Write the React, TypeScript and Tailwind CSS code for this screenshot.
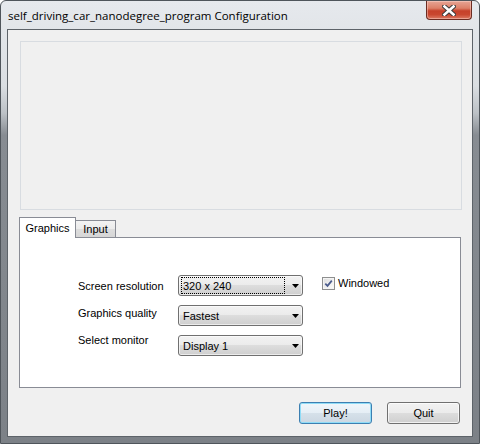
import { ReactNode } from "react"

const ui = "font-['Liberation_Sans',Arial,sans-serif] text-[11px] text-black"

function Combo({ value, focused }: { value: string; focused?: boolean }) {
  return (
    <div className="flex h-[21px] w-[125px] items-center rounded-[3px] border border-[#707070] bg-[linear-gradient(#f2f2f2,#ebebeb_50%,#dddddd_50%,#cfcfcf)] shadow-[inset_0_0_0_1px_rgba(255,255,255,0.6)]">
      <div
        className={
          "ml-[2px] flex h-[17px] w-[104px] items-center pl-px leading-[14px] " +
          (focused ? "border border-dotted border-black" : "border border-transparent")
        }
      >
        {value}
      </div>
      <svg width="7" height="4" viewBox="0 0 7 4" className="ml-auto mr-[3px]">
        <path d="M0 0 H7 L3.5 4 Z" fill="#000" />
      </svg>
    </div>
  )
}

function Button({ children, primary }: { children: ReactNode; primary?: boolean }) {
  return (
    <div
      className={
        "flex h-[22px] w-[73px] items-center justify-center rounded-[3px] border leading-[14px] " +
        (primary
          ? "border-[#3c7fb1] bg-[linear-gradient(#f0f6fa,#e5eef5_50%,#d6e1ea_50%,#cbd7e2)] shadow-[inset_0_0_0_1px_#8fdcf7]"
          : "border-[#707070] bg-[linear-gradient(#f2f2f2,#ebebeb_50%,#dddddd_50%,#cfcfcf)] shadow-[inset_0_0_0_1px_rgba(255,255,255,0.7)]")
      }
    >
      {children}
    </div>
  )
}

export default function App() {
  return (
    <div className="h-[444px] w-[480px] overflow-hidden rounded-t-[6px] border border-[#4f555b] bg-[linear-gradient(180deg,#e6e9ed_0px,#dadee2_85px,#bcc1c6_112px,#878c92_134px,#7c8187_100%)]">
      {/* title bar */}
      <div className="flex h-[28px] items-start justify-between">
        <div className="mt-[7px] pl-[7px] font-['Open_Sans',sans-serif] text-[11.5px] leading-[15px] text-black">
          self_driving_car_nanodegree_program Configuration
        </div>
        <div className="mr-[7px] flex h-[19px] w-[46px] items-center justify-center rounded-b-[4px] border border-t-0 border-[#6b2c22] bg-[linear-gradient(#e7a595,#dd8068_40%,#c6412a_55%,#c9472f_75%,#dc7a63)] shadow-[inset_0_0_0_1px_rgba(255,220,210,0.45)]">
          <svg width="14" height="11" viewBox="0 0 14 11">
            <path d="M2.5 1.5 L11.5 9.5 M11.5 1.5 L2.5 9.5" stroke="#3b3b3b" strokeWidth="4.6" strokeLinecap="square" />
            <path d="M2.5 1.5 L11.5 9.5 M11.5 1.5 L2.5 9.5" stroke="#ffffff" strokeWidth="2.6" strokeLinecap="square" />
          </svg>
        </div>
      </div>

      {/* client area */}
      <div className={"mx-[6px] flex h-[408px] flex-col border border-[#5d6369] bg-[#f0f0f0] " + ui}>
        <div className="ml-[12px] mt-[11px] h-[169px] w-[442px] border border-[#d8dce1] bg-[#f0f0f0]" />

        <div className="ml-[11px] mt-[7px] flex h-[21px] items-end">
          <div className="relative z-10 flex h-[21px] w-[57px] items-start justify-center border border-b-0 border-[#898c95] bg-white pt-[3px] leading-[14px]">
            Graphics
          </div>
          <div className="flex h-[18px] w-[40px] items-center justify-center border border-l-0 border-[#898c95] bg-[linear-gradient(#f3f3f3,#ebebeb_50%,#dddddd_50%,#d6d6d6)] leading-[14px]">
            Input
          </div>
        </div>

        <div className="-mt-px ml-[11px] flex h-[151px] w-[442px] border border-[#898c95] bg-white pl-[58px] pt-[37px]">
          <div className="flex w-[100px] flex-col gap-[13px] pt-[4px] leading-[14px]">
            <div>Screen resolution</div>
            <div>Graphics quality</div>
            <div>Select monitor</div>
          </div>
          <div className="flex flex-col gap-[9px]">
            <Combo value="320 x 240" focused />
            <Combo value="Fastest" />
            <Combo value="Display 1" />
          </div>
          <div className="ml-[19px] mt-[2px] flex h-[13px] items-center gap-[3px] leading-[14px]">
            <div className="flex h-[13px] w-[13px] items-center justify-center border border-[#8e8f8f] bg-[linear-gradient(135deg,#dcdcdc,#fdfdfd)] shadow-[inset_0_0_0_1px_#f4f4f4]">
              <svg width="9" height="9" viewBox="0 0 9 9">
                <path d="M1.3 4.6 L3.5 6.9 L7.8 1.6" fill="none" stroke="#4a5b8c" strokeWidth="1.7" />
              </svg>
            </div>
            <span className="-mt-px">Windowed</span>
          </div>
        </div>

        <div className="mt-[14px] flex justify-end gap-[15px] pr-[12px]">
          <Button primary>Play!</Button>
          <Button>Quit</Button>
        </div>
      </div>
    </div>
  )
}
